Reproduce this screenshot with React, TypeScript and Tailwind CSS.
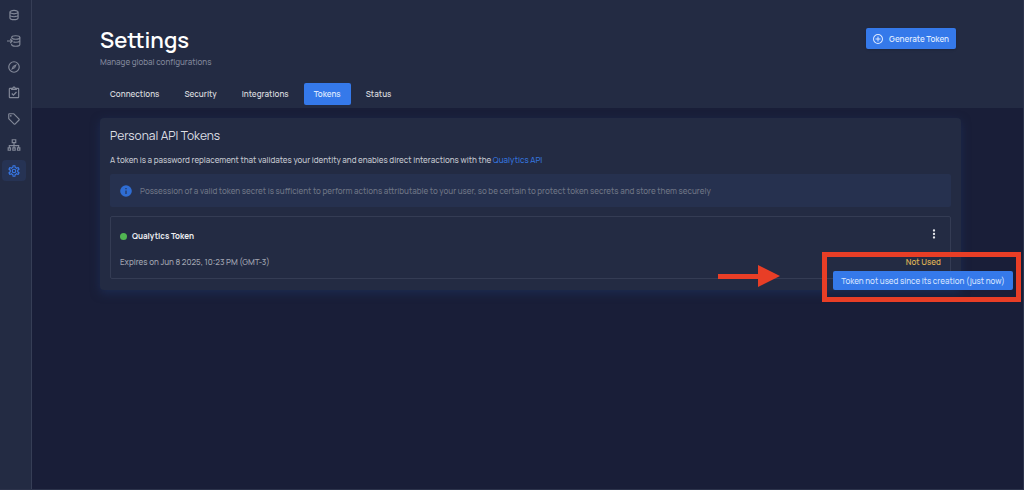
import type { ReactNode } from "react";

const DATABASE =
  "M12 3C7.58 3 4 4.79 4 7V17C4 19.21 7.59 21 12 21S20 19.21 20 17V7C20 4.79 16.42 3 12 3M18 17C18 17.5 15.87 19 12 19S6 17.5 6 17V14.77C7.61 15.55 9.72 16 12 16S16.39 15.55 18 14.77V17M18 12.45C16.7 13.4 14.42 14 12 14C9.58 14 7.3 13.4 6 12.45V9.64C7.47 10.47 9.61 11 12 11C14.39 11 16.53 10.47 18 9.64V12.45M12 9C8.13 9 6 7.5 6 7S8.13 5 12 5C15.87 5 18 6.5 18 7S15.87 9 12 9Z";
const COMPASS =
  "M7,17L10.2,10.2L17,7L13.8,13.8L7,17M12,11.1A0.9,0.9 0 0,0 11.1,12A0.9,0.9 0 0,0 12,12.9A0.9,0.9 0 0,0 12.9,12A0.9,0.9 0 0,0 12,11.1M12,2A10,10 0 0,1 22,12A10,10 0 0,1 12,22A10,10 0 0,1 2,12A10,10 0 0,1 12,2M12,4A8,8 0 0,0 4,12A8,8 0 0,0 12,20A8,8 0 0,0 20,12A8,8 0 0,0 12,4Z";
const CLIPBOARD =
  "M19,3H14.82C14.4,1.84 13.3,1 12,1C10.7,1 9.6,1.84 9.18,3H5A2,2 0 0,0 3,5V19A2,2 0 0,0 5,21H19A2,2 0 0,0 21,19V5A2,2 0 0,0 19,3M12,3A1,1 0 0,1 13,4A1,1 0 0,1 12,5A1,1 0 0,1 11,4A1,1 0 0,1 12,3M7,7H17V5H19V19H5V5H7V7M7.5,13.5L9,12L11,14L15.5,9.5L17,11L11,17L7.5,13.5Z";
const TAG =
  "M21.41 11.58L12.41 2.58A2 2 0 0 0 11 2H4A2 2 0 0 0 2 4V11A2 2 0 0 0 2.59 12.42L11.59 21.42A2 2 0 0 0 13 22A2 2 0 0 0 14.41 21.41L21.41 14.41A2 2 0 0 0 22 13A2 2 0 0 0 21.41 11.58M13 20L4 11V4H11L20 13M6.5 5A1.5 1.5 0 1 1 5 6.5A1.5 1.5 0 0 1 6.5 5Z";
const COG =
  "M12,8A4,4 0 0,1 16,12A4,4 0 0,1 12,16A4,4 0 0,1 8,12A4,4 0 0,1 12,8M12,10A2,2 0 0,0 10,12A2,2 0 0,0 12,14A2,2 0 0,0 14,12A2,2 0 0,0 12,10M10,22C9.75,22 9.54,21.82 9.5,21.58L9.13,18.93C8.5,18.68 7.96,18.34 7.44,17.94L4.95,18.95C4.73,19.03 4.46,18.95 4.34,18.73L2.34,15.27C2.21,15.05 2.27,14.78 2.46,14.63L4.57,12.97L4.5,12L4.57,11L2.46,9.37C2.27,9.22 2.21,8.95 2.34,8.73L4.34,5.27C4.46,5.05 4.73,4.96 4.95,5.05L7.44,6.05C7.96,5.66 8.5,5.32 9.13,5.07L9.5,2.42C9.54,2.18 9.75,2 10,2H14C14.25,2 14.46,2.18 14.5,2.42L14.87,5.07C15.5,5.32 16.04,5.66 16.56,6.05L19.05,5.05C19.27,4.96 19.54,5.05 19.66,5.27L21.66,8.73C21.79,8.95 21.73,9.22 21.54,9.37L19.43,11L19.5,12L19.43,13L21.54,14.63C21.73,14.78 21.79,15.05 21.66,15.27L19.66,18.73C19.54,18.95 19.27,19.04 19.05,18.95L16.56,17.95C16.04,18.34 15.5,18.68 14.87,18.93L14.5,21.58C14.46,21.82 14.25,22 14,22H10M11.25,4L10.88,6.61C9.68,6.86 8.62,7.5 7.85,8.39L5.44,7.35L4.69,8.65L6.8,10.2C6.4,11.37 6.4,12.64 6.8,13.8L4.68,15.36L5.43,16.66L7.86,15.62C8.63,16.5 9.68,17.14 10.87,17.38L11.24,20H12.76L13.13,17.39C14.32,17.14 15.37,16.5 16.14,15.62L18.57,16.66L19.32,15.36L17.2,13.81C17.6,12.64 17.6,11.37 17.2,10.2L19.31,8.65L18.56,7.35L16.15,8.39C15.38,7.5 14.32,6.86 13.12,6.62L12.75,4H11.25Z";

function Icon({ children, className = "size-[14px]" }: { children: ReactNode; className?: string }) {
  return (
    <svg viewBox="0 0 24 24" fill="currentColor" aria-hidden="true" className={className}>
      {children}
    </svg>
  );
}

const navItems: { label: string; icon: ReactNode }[] = [
  { label: "Datastores", icon: <path d={DATABASE} /> },
  {
    label: "Enrichment",
    icon: (
      <g fill="none" stroke="currentColor" strokeWidth="2">
        <ellipse cx="15" cy="6" rx="7" ry="3" />
        <path d="M22 6V18C22 20 19 21 15 21S8 20 8 18V16.500" />
        <path d="M11 13.500C12 14 13.500 14.200 15 14.200C18 14.200 21 13.300 22 12" />
        <path d="M0 12H9M5.500 8.500L9 12L5.500 15.500" />
      </g>
    ),
  },
  { label: "Explore", icon: <path d={COMPASS} /> },
  { label: "Checks", icon: <path d={CLIPBOARD} /> },
  { label: "Tags", icon: <path d={TAG} /> },
  {
    label: "Hierarchy",
    icon: (
      <g fill="none" stroke="currentColor" strokeWidth="2">
        <path d="M9 3H15V8H9ZM2 17H6V21H2ZM10 17H14V21H10ZM18 17H22V21H18ZM12 8V17M4 17V13H20V17" />
      </g>
    ),
  },
  { label: "Settings", icon: <path d={COG} /> },
];

const tabs = ["Connections", "Security", "Integrations", "Tokens", "Status"];

function Sidebar() {
  return (
    <nav aria-label="Main" className="flex w-8 shrink-0 flex-col gap-[5px] border-r border-[#363e56] bg-[#232b43] px-[2px] pt-1">
      {navItems.map(({ label, icon }) => (
        <button
          key={label}
          type="button"
          aria-label={label}
          className={
            label === "Settings"
              ? "flex h-[21px] w-6 items-center justify-center rounded bg-[#263354] text-[#3878e5]"
              : "flex h-[21px] w-6 items-center justify-center rounded text-[#828898]"
          }
        >
          <Icon>{icon}</Icon>
        </button>
      ))}
    </nav>
  );
}

function Header() {
  return (
    <header className="bg-[#232b43] pr-[62px] pl-[68px]">
      <div className="flex items-start justify-between pt-7 pr-[5px]">
        <div>
          <h1 className="text-[22px] leading-6 font-semibold text-white">Settings</h1>
          <p className="mt-1 text-[8px] leading-3 font-medium text-[#80869a]">Manage global configurations</p>
        </div>
        <button
          type="button"
          className="flex h-[21px] items-center gap-[5px] rounded-xs bg-[#3579ea] pr-[7px] pl-[6px] text-[8px] font-semibold text-[#dce8ff] shadow-sm"
        >
          <Icon className="size-3">
            <path d="M12 20C7.590 20 4 16.410 4 12S7.590 4 12 4 20 7.590 20 12 16.410 20 12 20M12 2A10 10 0 0 0 2 12A10 10 0 0 0 12 22A10 10 0 0 0 22 12A10 10 0 0 0 12 2M13 7H11V11H7V13H11V17H13V13H17V11H13V7Z" />
          </Icon>
          Generate Token
        </button>
      </div>
      <div role="tablist" aria-label="Settings sections" className="mt-[15px] flex gap-[5px] pb-[3px]">
        {tabs.map((tab) => (
          <button
            key={tab}
            type="button"
            role="tab"
            aria-selected={tab === "Tokens"}
            className={
              tab === "Tokens"
                ? "h-[22px] rounded-xs bg-[#3579ea] px-[10px] text-[8px] font-semibold text-[#dce8ff]"
                : "h-[22px] rounded-xs px-[10px] text-[8px] font-semibold text-[#d3d5da]"
            }
          >
            {tab}
          </button>
        ))}
      </div>
    </header>
  );
}

function UsageStatus() {
  return (
    <div className="relative font-semibold text-[#d9ad55]">
      Not Used
      <div
        role="tooltip"
        className="absolute top-[15px] -right-[72px] z-10 flex h-[19px] w-[180px] items-center justify-center rounded-xs bg-[#3579ea] font-medium whitespace-nowrap text-[#d5e3ff]"
      >
        Token not used since its creation (just now)
      </div>
      <div className="pointer-events-none absolute -top-1 -right-[80px] z-20 h-[50px] w-[199px] border-[5px] border-[#e83e26]" />
      <svg
        viewBox="0 0 62 24"
        aria-hidden="true"
        className="pointer-events-none absolute top-2 right-[161px] h-6 w-[62px] fill-[#e83e26]"
      >
        <path d="M0 10H40V1L62 12L40 23V15H0Z" />
      </svg>
    </div>
  );
}

function TokenRow() {
  return (
    <article className="mt-[9px] rounded-xs border border-[#343c54] px-[9px] pt-[9px] pb-[10px] text-[8px] leading-3">
      <div className="flex items-center justify-between">
        <div className="flex items-center gap-[5px] pt-1">
          <span className="size-[7px] rounded-full bg-[#51b652]" />
          <h3 className="font-bold text-[#eceef2]">Qualytics Token</h3>
        </div>
        <button type="button" aria-label="Token actions" className="text-[#e3e5ea]">
          <Icon>
            <path d="M12 16A2 2 0 1 1 12 20A2 2 0 1 1 12 16M12 10A2 2 0 1 1 12 14A2 2 0 1 1 12 10M12 4A2 2 0 1 1 12 8A2 2 0 1 1 12 4Z" />
          </Icon>
        </button>
      </div>
      <div className="mt-[14px] flex justify-between">
        <p className="font-medium text-[#a1a5b1]">Expires on Jun 8 2025, 10:23 PM (GMT-3)</p>
        <UsageStatus />
      </div>
    </article>
  );
}

export default function App() {
  return (
    <div className="flex min-h-screen overflow-x-hidden border-r border-b border-[#2c334b] bg-[#191e38] font-['Manrope','Inter',sans-serif]">
      <Sidebar />
      <div className="min-w-0 flex-1">
        <Header />
        <main className="pt-[10px] pr-[62px] pb-10 pl-[68px]">
          <section className="rounded-sm bg-[#232b43] px-[10px] pt-[10px] pb-[11px] shadow-[0_3px_10px_#1c2b50]">
            <h2 className="text-[12px] leading-4 text-[#dddfe4]">Personal API Tokens</h2>
            <p className="mt-[10px] text-[8px] leading-3 font-medium text-[#c4c7cf]">
              A token is a password replacement that validates your identity and enables direct interactions with the{" "}
              <a href="#api" className="text-[#3573dc]">
                Qualytics API
              </a>
            </p>
            <div className="mt-2 flex min-h-[33px] items-center gap-[7px] rounded-xs bg-[#26314f] px-[9px] text-[8px] leading-3 font-medium text-[#6e7585]">
              <Icon className="size-[14px] text-[#2f6dd3]">
                <path d="M13 9H11V7H13M13 17H11V11H13M12 2A10 10 0 1 0 12 22A10 10 0 1 0 12 2Z" fillRule="evenodd" />
              </Icon>
              <p>
                Possession of a valid token secret is sufficient to perform actions attributable to your user, so be
                certain to protect token secrets and store them securely
              </p>
            </div>
            <TokenRow />
          </section>
        </main>
      </div>
    </div>
  );
}
